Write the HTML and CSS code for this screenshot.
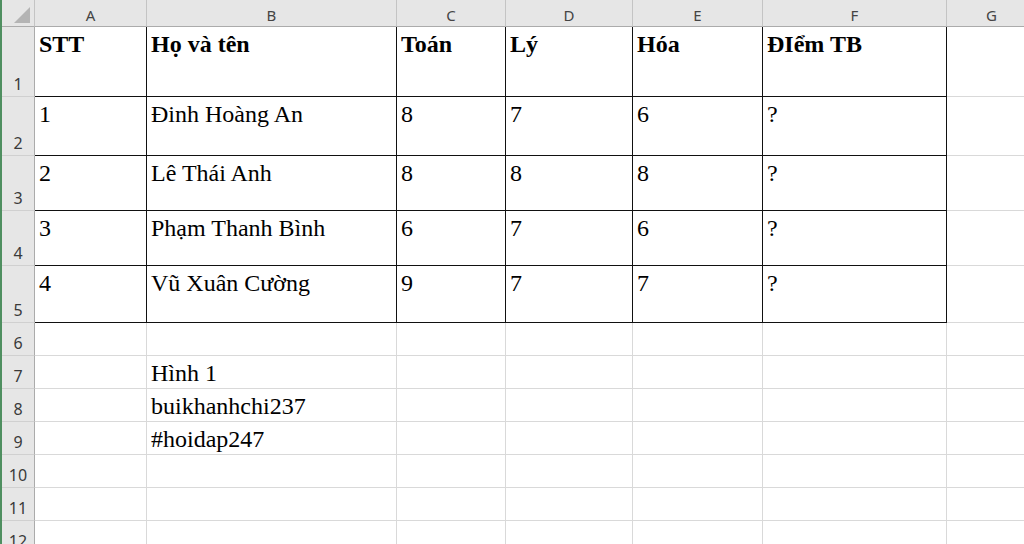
FILE: index.html
```html
<!DOCTYPE html>
<html lang="vi">
<head>
  <meta charset="UTF-8" />
  <title>Bảng điểm</title>
  <link rel="stylesheet" href="styles.css">
</head>
<body>

  <div class="sheet">
    <!-- column headers -->
    <div class="corner">
      <svg width="16" height="16" viewBox="0 0 16 16"><polygon points="16,0 16,16 0,16" fill="#b4b4b4" /></svg>
    </div>
    <div class="colhead">A</div>
    <div class="colhead">B</div>
    <div class="colhead">C</div>
    <div class="colhead">D</div>
    <div class="colhead">E</div>
    <div class="colhead">F</div>
    <div class="colhead">G</div>

    <!-- row 1 -->
    <div class="rowhead">1</div>
    <div class="cell tb bold">STT</div>
    <div class="cell tb bold">Họ và tên</div>
    <div class="cell tb bold">Toán</div>
    <div class="cell tb bold">Lý</div>
    <div class="cell tb bold">Hóa</div>
    <div class="cell tb bold">ĐIểm TB</div>
    <div class="cell"></div>

    <!-- row 2 -->
    <div class="rowhead">2</div>
    <div class="cell tb">1</div>
    <div class="cell tb">Đinh Hoàng An</div>
    <div class="cell tb">8</div>
    <div class="cell tb">7</div>
    <div class="cell tb">6</div>
    <div class="cell tb">?</div>
    <div class="cell"></div>

    <!-- row 3 -->
    <div class="rowhead">3</div>
    <div class="cell tb">2</div>
    <div class="cell tb">Lê Thái Anh</div>
    <div class="cell tb">8</div>
    <div class="cell tb">8</div>
    <div class="cell tb">8</div>
    <div class="cell tb">?</div>
    <div class="cell"></div>

    <!-- row 4 -->
    <div class="rowhead">4</div>
    <div class="cell tb">3</div>
    <div class="cell tb">Phạm Thanh Bình</div>
    <div class="cell tb">6</div>
    <div class="cell tb">7</div>
    <div class="cell tb">6</div>
    <div class="cell tb">?</div>
    <div class="cell"></div>

    <!-- row 5 -->
    <div class="rowhead">5</div>
    <div class="cell tb">4</div>
    <div class="cell tb">Vũ Xuân Cường</div>
    <div class="cell tb">9</div>
    <div class="cell tb">7</div>
    <div class="cell tb">7</div>
    <div class="cell tb">?</div>
    <div class="cell"></div>

    <!-- row 6 -->
    <div class="rowhead">6</div>
    <div class="cell"></div>
    <div class="cell"></div>
    <div class="cell"></div>
    <div class="cell"></div>
    <div class="cell"></div>
    <div class="cell"></div>
    <div class="cell"></div>

    <!-- row 7 -->
    <div class="rowhead">7</div>
    <div class="cell"></div>
    <div class="cell">Hình 1</div>
    <div class="cell"></div>
    <div class="cell"></div>
    <div class="cell"></div>
    <div class="cell"></div>
    <div class="cell"></div>

    <!-- row 8 -->
    <div class="rowhead">8</div>
    <div class="cell"></div>
    <div class="cell">buikhanhchi237</div>
    <div class="cell"></div>
    <div class="cell"></div>
    <div class="cell"></div>
    <div class="cell"></div>
    <div class="cell"></div>

    <!-- row 9 -->
    <div class="rowhead">9</div>
    <div class="cell"></div>
    <div class="cell">#hoidap247</div>
    <div class="cell"></div>
    <div class="cell"></div>
    <div class="cell"></div>
    <div class="cell"></div>
    <div class="cell"></div>

    <!-- row 10 -->
    <div class="rowhead">10</div>
    <div class="cell"></div>
    <div class="cell"></div>
    <div class="cell"></div>
    <div class="cell"></div>
    <div class="cell"></div>
    <div class="cell"></div>
    <div class="cell"></div>

    <!-- row 11 -->
    <div class="rowhead">11</div>
    <div class="cell"></div>
    <div class="cell"></div>
    <div class="cell"></div>
    <div class="cell"></div>
    <div class="cell"></div>
    <div class="cell"></div>
    <div class="cell"></div>

    <!-- row 12 -->
    <div class="rowhead">12</div>
    <div class="cell"></div>
    <div class="cell"></div>
    <div class="cell"></div>
    <div class="cell"></div>
    <div class="cell"></div>
    <div class="cell"></div>
    <div class="cell"></div>
  </div>

</body>
</html>
```

FILE: styles.css
```css
* {
  box-sizing: border-box;
}

html, body {
  margin: 0;
  height: 100%;
  overflow: hidden;
  background: #fff;
}

body {
  border-left: 2px solid #4f8f60;
}

.sheet {
  display: grid;
  grid-template-columns: 33px 112px 250px 109px 127px 130px 184px 90px;
  grid-template-rows: 27px 70px 59px 55px 55px 57px repeat(7, 33px);
}

.corner {
  background: #e6e6e6;
  border-right: 1px solid #c4c4c4;
  border-bottom: 1px solid #ababab;
  display: flex;
  align-items: flex-end;
  justify-content: flex-end;
  padding: 0 4px 3px 0;
}

.colhead {
  background: #e6e6e6;
  border-right: 1px solid #c4c4c4;
  border-bottom: 1px solid #ababab;
  font-family: "Noto Sans", sans-serif;
  font-size: 15px;
  color: #444;
  display: flex;
  align-items: flex-end;
  justify-content: center;
  padding-bottom: 1px;
}

.rowhead {
  background: #e6e6e6;
  border-right: 1px solid #ababab;
  border-bottom: 1px solid #d0d0d0;
  font-family: "Noto Sans", sans-serif;
  font-size: 16px;
  color: #3a3a3a;
  display: flex;
  align-items: flex-end;
  justify-content: center;
  padding-bottom: 1px;
}

.cell {
  border-right: 1px solid #d9d9d9;
  border-bottom: 1px solid #d9d9d9;
  font-family: "Liberation Serif", "Times New Roman", serif;
  font-size: 24px;
  color: #000;
  padding: 4px 0 0 4px;
  white-space: nowrap;
}

.cell.tb {
  border-right-color: #111;
  border-bottom-color: #111;
}

.bold {
  font-weight: bold;
}
```
